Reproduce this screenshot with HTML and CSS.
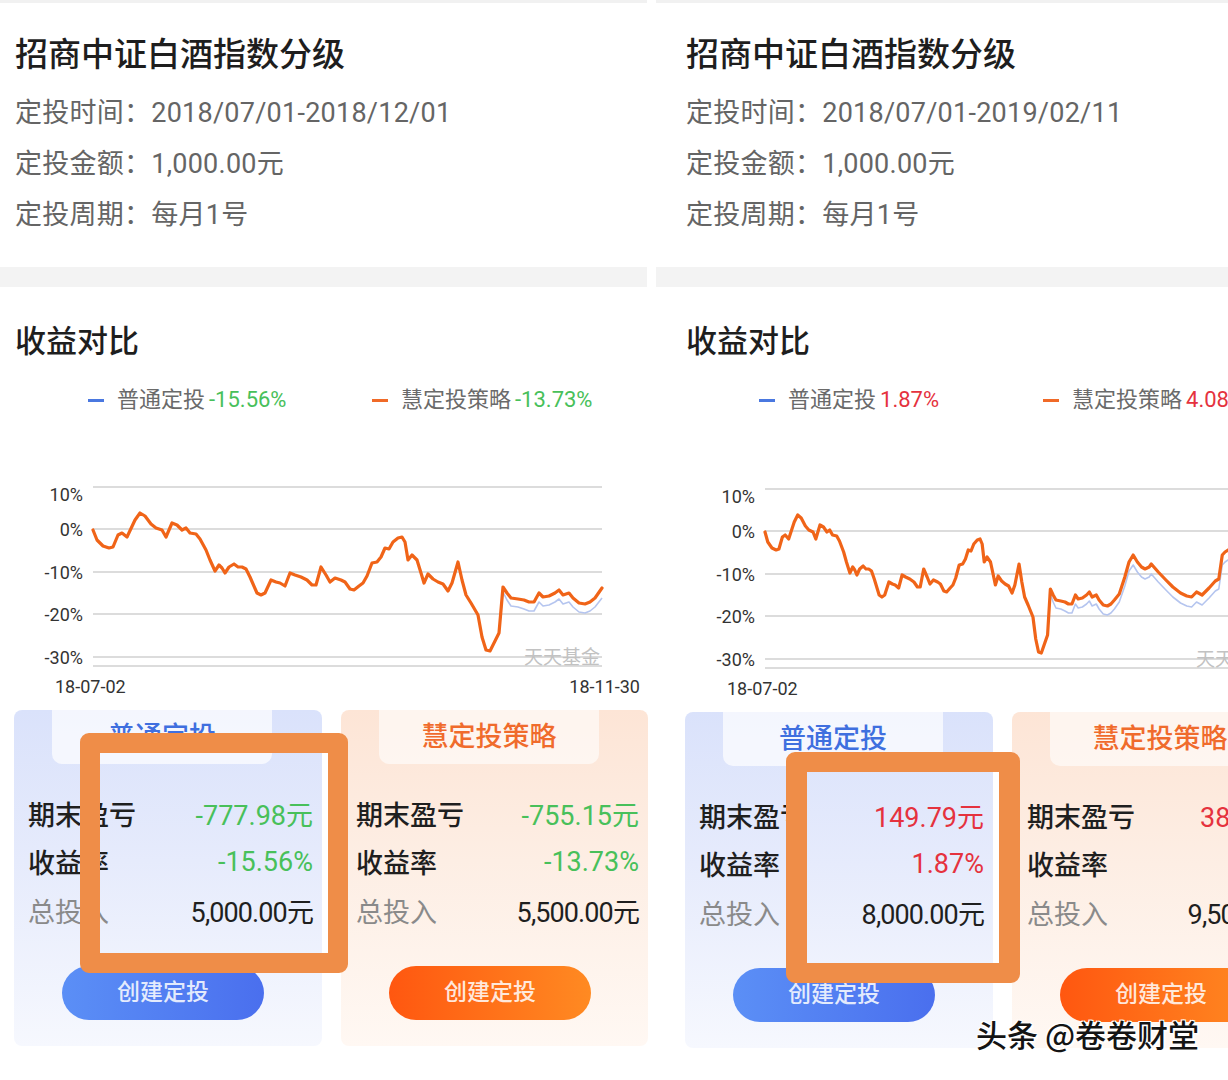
FILE: index.html
```html
<!DOCTYPE html>
<html lang="zh-CN">
<head>
<meta charset="utf-8">
<title>收益对比</title>
<link rel="stylesheet" href="styles.css">
</head>
<body>
<div class="screen">
  <section class="panel">
    <div class="band-top"></div>
    <div class="info">
      <h1 class="fund-title">招商中证白酒指数分级</h1>
      <p class="info-line">定投时间：2018/07/01-2018/12/01</p>
      <p class="info-line">定投金额：1,000.00元</p>
      <p class="info-line">定投周期：每月1号</p>
    </div>
    <div class="band-sep"></div>
    <h2 class="section-title">收益对比</h2>
    <div class="legend">
      <div class="legend-item"><span class="dash dash-blue"></span><span class="legend-name">普通定投</span><span class="val-green">-15.56%</span></div>
      <div class="legend-item"><span class="dash dash-orange"></span><span class="legend-name">慧定投策略</span><span class="val-green">-13.73%</span></div>
    </div>
    <svg class="chart" width="647" height="230" viewBox="0 470 647 230">
      <g class="grid">
        <line x1="93" y1="487" x2="602" y2="487"/>
        <line x1="93" y1="529" x2="602" y2="529"/>
        <line x1="93" y1="572" x2="602" y2="572"/>
        <line x1="93" y1="614" x2="602" y2="614"/>
        <line x1="93" y1="657" x2="602" y2="657"/>
        <line x1="93" y1="666" x2="602" y2="666"/>
      </g>
      <g class="ylab">
        <text x="83" y="500.5">10%</text>
        <text x="83" y="535.5">0%</text>
        <text x="83" y="578.5">-10%</text>
        <text x="83" y="620.5">-20%</text>
        <text x="83" y="663.5">-30%</text>
      </g>
      <text class="brand" x="600" y="664">天天基金</text>
      <path class="line-blue" d="M499,633 L503,592 L507,600 L511,606 L518,607 L524,609 L529,611 L534,611 L539,602 L543,606 L549,605 L555,602 L559,599 L563,604 L569,602 L573,607 L579,612 L585,613 L590,611 L595,607 L602,598"/>
      <path class="line-orange" d="M93,530 L97,540 L103,546 L109,548 L113,547 L118,535 L122,533 L127,537 L135,520 L140,513 L145,516 L151,524 L156,528 L162,530 L166,537 L172,523 L177,525 L182,530 L186,528 L190,533 L196,534 L200,539 L206,550 L210,560 L215,571 L219,565 L222,568 L225,573 L229,567 L234,564 L238,567 L242,567 L246,569 L250,577 L257,593 L261,595 L265,593 L271,580 L276,582 L280,583 L285,586 L290,573 L295,575 L301,577 L307,580 L312,585 L316,585 L321,567 L326,575 L330,582 L335,578 L341,580 L345,582 L350,589 L354,590 L359,586 L363,583 L367,576 L372,563 L377,562 L381,557 L385,548 L389,549 L393,542 L398,538 L402,537 L405,542 L408,560 L412,555 L417,560 L421,573 L424,583 L428,574 L433,579 L438,582 L443,584 L448,591 L452,583 L458,562 L462,580 L466,595 L471,603 L478,615 L482,637 L486,650 L490,651 L494,643 L499,633 L503,587 L507,593 L511,598 L518,599 L524,600 L529,602 L534,602 L539,593 L543,597 L549,596 L555,593 L559,590 L563,595 L569,593 L573,598 L579,603 L585,604 L590,602 L595,598 L602,588"/>
      <g class="xlab">
        <text x="55" y="692.5">18-07-02</text>
        <text x="640" y="692.5" text-anchor="end">18-11-30</text>
      </g>
    </svg>
    <div class="cards">
      <div class="card card-blue">
        <div class="tab">普通定投</div>
        <div class="rows">
          <div class="row"><span class="lbl">期末盈亏</span><span class="num val-green">-777.98元</span></div>
          <div class="row"><span class="lbl">收益率</span><span class="num val-green">-15.56%</span></div>
          <div class="row"><span class="lbl lbl-light">总投入</span><span class="num num-total">5,000.00元</span></div>
        </div>
        <div class="btn">创建定投</div>
      </div>
      <div class="card card-orange">
        <div class="tab">慧定投策略</div>
        <div class="rows">
          <div class="row"><span class="lbl">期末盈亏</span><span class="num val-green">-755.15元</span></div>
          <div class="row"><span class="lbl">收益率</span><span class="num val-green">-13.73%</span></div>
          <div class="row"><span class="lbl lbl-light">总投入</span><span class="num num-total">5,500.00元</span></div>
        </div>
        <div class="btn">创建定投</div>
      </div>
    </div>
    <div class="mark mark-a"></div>
  </section>

  <section class="panel panel-b">
    <div class="band-top"></div>
    <div class="info">
      <h1 class="fund-title">招商中证白酒指数分级</h1>
      <p class="info-line">定投时间：2018/07/01-2019/02/11</p>
      <p class="info-line">定投金额：1,000.00元</p>
      <p class="info-line">定投周期：每月1号</p>
    </div>
    <div class="band-sep"></div>
    <h2 class="section-title">收益对比</h2>
    <div class="legend">
      <div class="legend-item"><span class="dash dash-blue"></span><span class="legend-name">普通定投</span><span class="val-red">1.87%</span></div>
      <div class="legend-item"><span class="dash dash-orange"></span><span class="legend-name">慧定投策略</span><span class="val-red">4.08%</span></div>
    </div>
    <svg class="chart chart-b" width="647" height="230" viewBox="0 470 647 230">
      <g class="grid">
        <line x1="94" y1="487" x2="603" y2="487"/>
        <line x1="94" y1="529" x2="603" y2="529"/>
        <line x1="94" y1="572" x2="603" y2="572"/>
        <line x1="94" y1="614" x2="603" y2="614"/>
        <line x1="94" y1="657" x2="603" y2="657"/>
        <line x1="94" y1="666" x2="603" y2="666"/>
      </g>
      <g class="ylab">
        <text x="84" y="500.5">10%</text>
        <text x="84" y="535.5">0%</text>
        <text x="84" y="578.5">-10%</text>
        <text x="84" y="620.5">-20%</text>
        <text x="84" y="663.5">-30%</text>
      </g>
      <text class="brand" x="601" y="664">天天基金</text>
      <g transform="translate(94,0) scale(0.696,1) translate(-93,0)">
        <path class="line-blue" vector-effect="non-scaling-stroke" d="M499,633 L503,592 L507,600 L511,606 L518,607 L524,609 L529,611 L534,611 L539,602 L543,606 L549,605 L555,602 L559,599 L563,604 L569,602 L573,607 L579,612 L585,613 L590,611 L595,607 L602,600 L610,584 L616,569 L622,563 L628,570 L634,575 L639,577 L645,575 L648,572 L658,580 L669,588 L679,595 L690,601 L699,604 L706,605 L713,600 L721,603 L731,596 L740,589 L745,587 L750,563 L754,560 L765,555"/>
        <path class="line-orange" vector-effect="non-scaling-stroke" d="M93,530 L97,540 L103,546 L109,548 L113,547 L118,535 L122,533 L127,537 L135,520 L140,513 L145,516 L151,524 L156,528 L162,530 L166,537 L172,523 L177,525 L182,530 L186,528 L190,533 L196,534 L200,539 L206,550 L210,560 L215,571 L219,565 L222,568 L225,573 L229,567 L234,564 L238,567 L242,567 L246,569 L250,577 L257,593 L261,595 L265,593 L271,580 L276,582 L280,583 L285,586 L290,573 L295,575 L301,577 L307,580 L312,585 L316,585 L321,567 L326,575 L330,582 L335,578 L341,580 L345,582 L350,589 L354,590 L359,586 L363,583 L367,576 L372,563 L377,562 L381,557 L385,548 L389,549 L393,542 L398,538 L402,537 L405,542 L408,560 L412,555 L417,560 L421,573 L424,583 L428,574 L433,579 L438,582 L443,584 L448,591 L452,583 L458,562 L462,580 L466,595 L471,603 L478,615 L482,637 L486,650 L490,651 L494,643 L499,633 L503,587 L507,593 L511,598 L518,599 L524,600 L529,602 L534,602 L539,593 L543,597 L549,596 L555,593 L559,590 L563,595 L569,593 L573,598 L579,603 L585,604 L590,602 L595,598 L602,592 L610,575 L616,560 L622,553 L628,560 L634,565 L639,567 L645,565 L648,562 L658,570 L669,578 L679,585 L690,591 L699,594 L706,595 L713,590 L721,593 L731,586 L740,579 L745,577 L750,553 L754,550 L765,545"/>
      </g>
      <g class="xlab">
        <text x="56" y="692.5">18-07-02</text>
        <text x="641" y="692.5" text-anchor="end">19-02-11</text>
      </g>
    </svg>
    <div class="cards">
      <div class="card card-blue">
        <div class="tab">普通定投</div>
        <div class="rows">
          <div class="row"><span class="lbl">期末盈亏</span><span class="num val-red">149.79元</span></div>
          <div class="row"><span class="lbl">收益率</span><span class="num val-red">1.87%</span></div>
          <div class="row"><span class="lbl lbl-light">总投入</span><span class="num num-total">8,000.00元</span></div>
        </div>
        <div class="btn">创建定投</div>
      </div>
      <div class="card card-orange">
        <div class="tab">慧定投策略</div>
        <div class="rows">
          <div class="row"><span class="lbl">期末盈亏</span><span class="num val-red">387.60元</span></div>
          <div class="row"><span class="lbl">收益率</span><span class="num val-red">4.08%</span></div>
          <div class="row"><span class="lbl lbl-light">总投入</span><span class="num num-total">9,500.00元</span></div>
        </div>
        <div class="btn">创建定投</div>
      </div>
    </div>
    <div class="mark mark-b"></div>
  </section>

  <div class="watermark">头条 @卷卷财堂</div>
</div>
</body>
</html>
```
FILE: styles.css
```css
* { box-sizing: border-box; }
html, body { margin: 0; padding: 0; }
body {
  width: 1228px;
  height: 1080px;
  overflow: hidden;
  background: #fff;
  font-family: Roboto, "Noto Sans CJK SC", sans-serif;
  color: #222;
}
.screen {
  position: relative;
  display: flex;
  width: 1228px;
  height: 1080px;
  overflow: hidden;
}
.panel {
  position: relative;
  flex: none;
  width: 647px;
}
.panel-b { margin-left: 24px; }

.band-top { height: 3px; background: #f1f1f1; }
.band-sep { height: 20px; background: #f3f3f3; }
.panel-b .band-top,
.panel-b .band-sep { margin-left: -15px; margin-right: -15px; }

.info {
  height: 264px;
  padding: 32px 0 0 15px;
}
.fund-title {
  margin: 0;
  font-size: 33px;
  line-height: 40px;
  font-weight: 500;
  color: #1e1e1e;
}
.info-line {
  margin: 0;
  font-size: 27px;
  line-height: 51px;
  letter-spacing: 0.25px;
  color: #656565;
}
.fund-title + .info-line { margin-top: 13px; }

.section-title {
  margin: 35px 0 0 15px;
  font-size: 31px;
  line-height: 40px;
  font-weight: 500;
  color: #1e1e1e;
}

.legend {
  display: grid;
  grid-template-columns: 284px auto;
  margin-top: 23px;
  padding-left: 88px;
  height: 30px;
  line-height: 30px;
  font-size: 22px;
  white-space: nowrap;
}
.legend-item { display: flex; align-items: center; }
.dash { display: inline-block; width: 16px; height: 3px; margin-right: 13px; }
.dash-blue { background: #4a78e0; }
.dash-orange { background: #f06a28; }
.legend-name { color: #6a6a6a; margin-right: 4px; }
.val-green { color: #48c05a; }
.val-red { color: #e5323e; }

.chart { display: block; margin-top: 55px; overflow: visible; }
.chart-b { margin-top: 57px; }
.grid line { stroke: #dcdcdc; stroke-width: 2; }
.ylab text { font-size: 18px; fill: #333; text-anchor: end; font-family: Roboto, sans-serif; }
.xlab text { font-size: 18px; fill: #333; font-family: Roboto, sans-serif; }
.brand { font-size: 19px; fill: #c2c2c2; text-anchor: end; font-family: "Noto Sans CJK SC", sans-serif; }
.line-orange { fill: none; stroke: #f06418; stroke-width: 3.2; stroke-linejoin: round; stroke-linecap: round; }
.line-blue { fill: none; stroke: #b5c5ef; stroke-width: 1.6; stroke-linejoin: round; }

.cards {
  display: flex;
  gap: 19px;
  margin: 10px 0 0 14px;
}
.card {
  flex: none;
  width: 308px;
  height: 336px;
  border-radius: 8px;
  padding: 0 9px 0 14px;
}
.card-orange { width: 307px; padding-left: 15px; }
.card-blue { background: linear-gradient(180deg, #dae2fb 0%, #e6ebfc 45%, #f6f8fe 100%); }
.card-orange { background: linear-gradient(180deg, #fde5d6 0%, #fdeee4 45%, #fff8f3 100%); }
.tab {
  width: 220px;
  height: 54px;
  margin-left: 24px;
  border-radius: 0 0 10px 10px;
  text-align: center;
  line-height: 54px;
  font-size: 27px;
  font-weight: 500;
}
.card-blue .tab { background: rgba(255, 255, 255, 0.7); color: #3f6fdf; }
.card-orange .tab { background: rgba(255, 255, 255, 0.6); color: #f06b2c; margin-left: 23px; }

.rows { margin-top: 25px; }
.row {
  display: flex;
  justify-content: space-between;
  align-items: center;
  height: 48.5px;
  font-size: 27px;
  white-space: nowrap;
}
.lbl { color: #1f1f1f; font-weight: 500; }
.lbl-light { color: #8a8a8a; font-weight: 400; }
.num { color: #1f1f1f; }
.num-total { letter-spacing: -0.9px; }
.num.val-green { color: #48c05a; }
.num.val-red { color: #e5323e; }

.btn {
  width: 202px;
  height: 54px;
  margin: 31px 0 0 34px;
  border-radius: 27px;
  text-align: center;
  line-height: 54px;
  font-size: 23px;
  font-weight: 500;
  color: rgba(255, 255, 255, 0.85);
}
.card-orange .btn { margin-left: 33px; }
.card-blue .btn { background: linear-gradient(90deg, #5b8ff6 0%, #4a6fee 100%); }
.card-orange .btn { background: linear-gradient(90deg, #ff5710 0%, #ff8a22 100%); }

.mark {
  position: absolute;
  border: 20px solid #ef8d48;
  border-radius: 9px;
}
.mark-a { left: 80px; top: 733px; width: 268px; height: 240px; }
.mark-b { left: 115px; top: 752px; width: 234px; height: 231px; border-width: 20px 21px; }

.watermark {
  position: absolute;
  left: 976px;
  top: 1014px;
  font-family: "Noto Sans CJK SC", sans-serif;
  font-size: 31px;
  line-height: 40px;
  font-weight: 500;
  color: #141414;
  white-space: nowrap;
  text-shadow: 1px 1px 0 #fff, -1px -1px 0 #fff, 1px -1px 0 #fff, -1px 1px 0 #fff, 2px 2px 1px rgba(255,255,255,0.9);
}
```
